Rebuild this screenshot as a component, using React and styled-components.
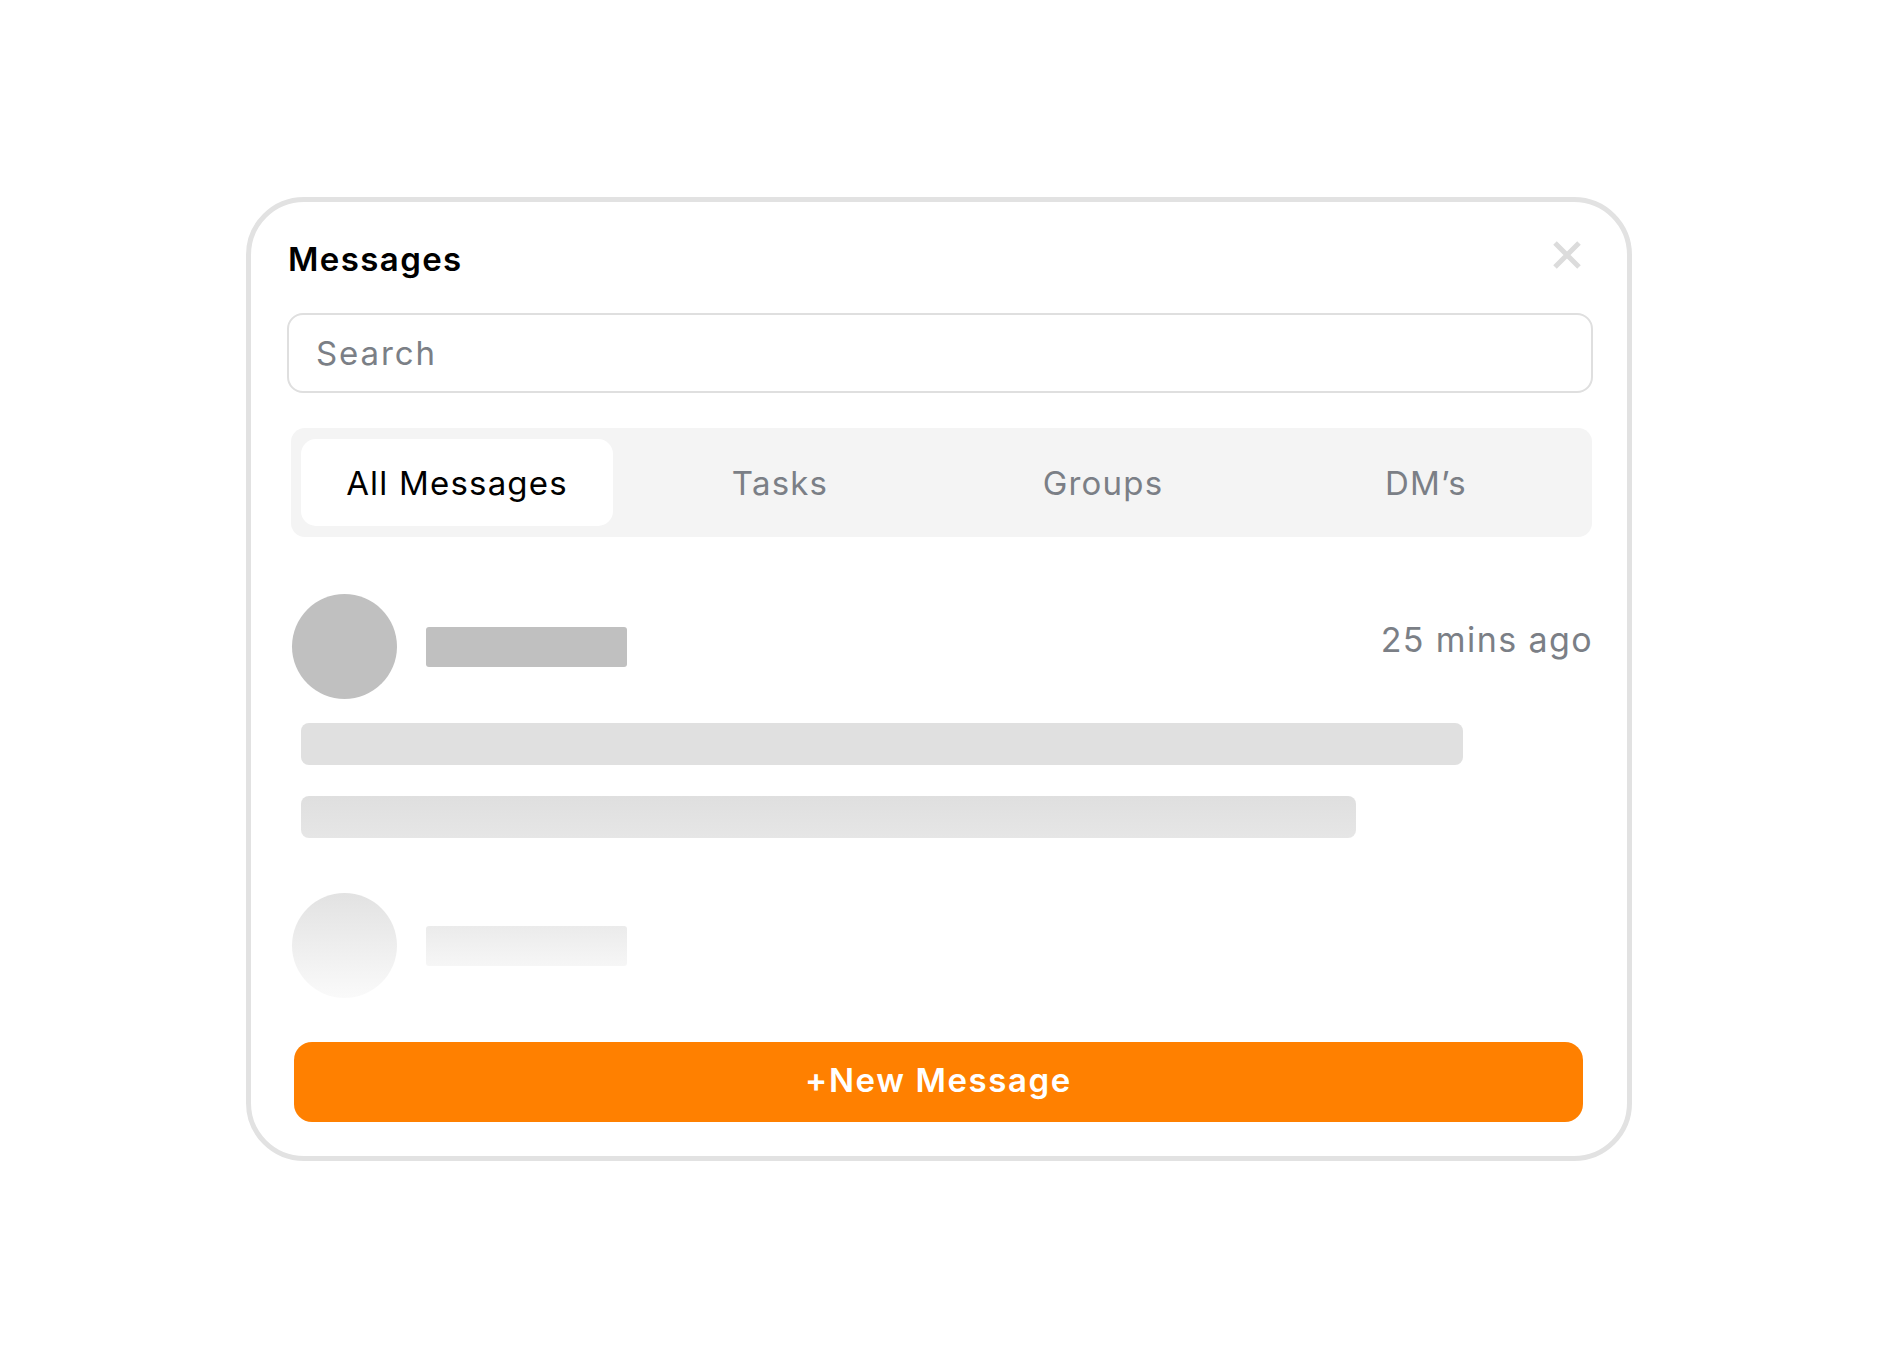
import styled, { createGlobalStyle } from "styled-components";

const GlobalStyle = createGlobalStyle`
  html, body {
    margin: 0;
    padding: 0;
    background: #ffffff;
  }
  body {
    font-family: Inter, "Noto Sans", "Liberation Sans", sans-serif;
  }
  * {
    box-sizing: border-box;
  }
`;

const Page = styled.div`
  width: 1879px;
  min-height: 1357px;
  padding: 197px 0 0 246px;
`;

const Card = styled.section`
  width: 1386px;
  height: 964px;
  border: 5px solid #e2e2e2;
  border-radius: 58px;
  padding: 40px 34px 34px 36px;
  display: flex;
  flex-direction: column;
`;

const Header = styled.header`
  display: flex;
  align-items: center;
  justify-content: space-between;
  height: 34px;
  padding-right: 12px;
`;

const Title = styled.h1`
  margin: 0 0 0 1px;
  font-size: 33px;
  line-height: 34px;
  font-weight: 600;
  color: #000000;
  letter-spacing: 1.4px;
`;

const CloseButton = styled.button`
  align-self: flex-start;
  margin-top: -1px;
  border: 0;
  padding: 0;
  background: none;
  width: 28px;
  height: 28px;
  display: flex;
  cursor: pointer;
`;

const SearchInput = styled.input`
  margin-top: 37px;
  width: 100%;
  height: 80px;
  border: 2px solid #dfdfdf;
  border-radius: 16px;
  padding: 0 0 0 27px;
  font-family: inherit;
  font-size: 33px;
  letter-spacing: 1.9px;
  color: #000;
  outline: none;

  &::placeholder {
    color: #7b7f86;
  }
`;

const Tabs = styled.nav`
  margin: 35px 1px 0 4px;
  height: 109px;
  padding: 11px 10px;
  background: #f4f4f4;
  border-radius: 14px;
  display: grid;
  grid-template-columns: repeat(4, 1fr);
  column-gap: 11px;
`;

const Tab = styled.button`
  border: 0;
  border-radius: 15px;
  background: ${props => (props.active ? "#ffffff" : "transparent")};
  color: ${props => (props.active ? "#000000" : "#7b7f86")};
  font-family: inherit;
  font-size: 33px;
  font-weight: 400;
  letter-spacing: 1.2px;
  cursor: pointer;
`;

const Row = styled.div`
  margin-top: ${props => props.gap}px;
  margin-left: 5px;
  display: flex;
  align-items: center;
  height: 105px;
`;

const Avatar = styled.div`
  width: 105px;
  height: 105px;
  border-radius: 50%;
  background: ${props => (props.faded ? "linear-gradient(#e2e2e2, #fafafa)" : "#c0c0c0")};
`;

const NameBar = styled.div`
  margin-left: 29px;
  width: 201px;
  height: 40px;
  border-radius: 3px;
  background: ${props => (props.faded ? "linear-gradient(#ebebeb, #f6f6f6)" : "#c0c0c0")};
`;

const Time = styled.span`
  margin-left: auto;
  margin-right: 0;
  margin-bottom: 15px;
  font-size: 34px;
  letter-spacing: 1.4px;
  color: #7b7f86;
`;

const Line = styled.div`
  margin-top: ${props => props.gap}px;
  margin-left: 14px;
  width: ${props => props.width}px;
  height: 42px;
  border-radius: 8px;
  background: ${props => props.bg};
`;

const NewMessageButton = styled.button`
  margin: 44px 10px 0 7px;
  height: 80px;
  padding: 0 0 4px;
  border: 0;
  border-radius: 18px;
  background: #ff8000;
  color: #ffffff;
  font-family: inherit;
  font-size: 33px;
  font-weight: 600;
  letter-spacing: 1.6px;
  cursor: pointer;
`;

const tabs = ["All Messages", "Tasks", "Groups", "DM\u2019s"];

export default function App() {
  return (
    <Page>
      <GlobalStyle />
      <Card>
        <Header>
          <Title>Messages</Title>
          <CloseButton aria-label="Close">
            <svg width="28" height="28" viewBox="0 0 28 28">
              <path d="M2 2 L26 26 M26 2 L2 26" stroke="#dcdcdc" strokeWidth="5" />
            </svg>
          </CloseButton>
        </Header>
        <SearchInput placeholder="Search" />
        <Tabs>
          {tabs.map((t, i) => (
            <Tab key={t} active={i === 0}>{t}</Tab>
          ))}
        </Tabs>
        <Row gap={57}>
          <Avatar />
          <NameBar />
          <Time>25 mins ago</Time>
        </Row>
        <Line gap={24} width={1162} bg="#e0e0e0" />
        <Line gap={31} width={1055} bg="linear-gradient(#dfdfdf, #e6e6e6)" />
        <Row gap={55}>
          <Avatar faded />
          <NameBar faded />
        </Row>
        <NewMessageButton>+New Message</NewMessageButton>
      </Card>
    </Page>
  );
}
